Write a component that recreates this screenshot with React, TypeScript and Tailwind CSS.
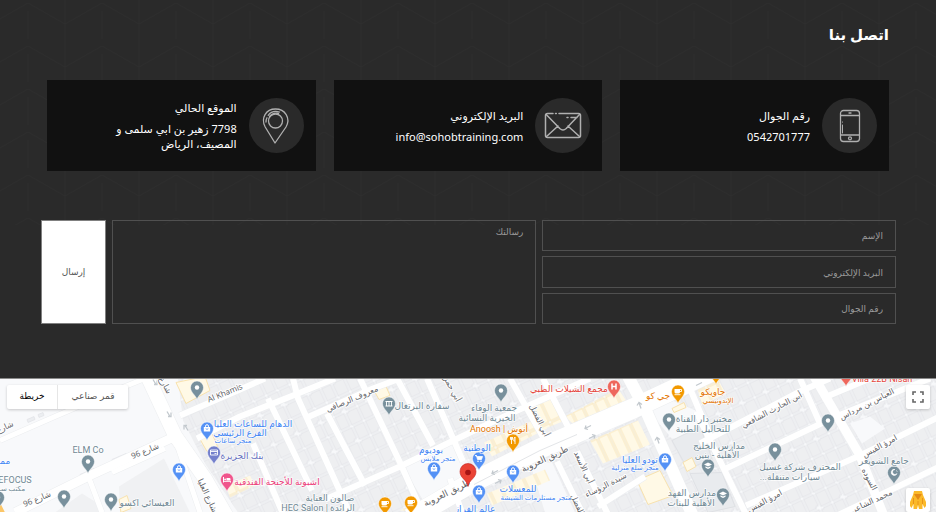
import type { ReactNode } from "react";

const uiFont = "font-['Noto_Sans','DejaVu_Sans',sans-serif]";

function PhoneIcon() {
  return (
    <svg className="h-9 w-9" viewBox="0 0 36 36" fill="none" stroke="#b0b0b0" strokeWidth="1.3" strokeLinecap="round" aria-hidden="true">
      <rect x="8.5" y="2.5" width="19" height="31" rx="3" />
      <path d="M9 7.500h18M9 27h18" />
      <path d="M10.500 17v8M10.500 14v.2" strokeWidth="1" />
      <path d="M17 5h2" />
      <circle cx="18" cy="30.300" r="1.500" />
    </svg>
  );
}

function MailIcon() {
  return (
    <svg className="h-10 w-10" viewBox="0 0 40 40" fill="none" stroke="#b0b0b0" strokeWidth="1.5" strokeLinecap="round" strokeLinejoin="round" aria-hidden="true">
      <path d="M10 7.500H4.500A2 2 0 0 0 2.500 9.500v20a2 2 0 0 0 2 2h31a2 2 0 0 0 2-2v-20a2 2 0 0 0-2-2H16M12.500 7.500h.8" />
      <path d="M3.200 8.500l13.600 14q3.200 3 6.400 0L36.500 8.500M3.500 30.500l11.500-10.500M36.500 30.500L25 20M28 11.500h6M24 11.500h1" />
    </svg>
  );
}

function PinIcon() {
  return (
    <svg className="h-9 w-9" viewBox="0 0 36 36" fill="none" stroke="#b0b0b0" strokeWidth="1.3" strokeLinecap="round" strokeLinejoin="round" aria-hidden="true">
      <path d="M17 35L7.200 19C2.500 10 8 1 17.500 1S33 10 28 19z" />
      <circle cx="17.500" cy="13" r="7" />
      <path d="M8 14c0-1.500.3-3 1-4.300M10.200 7.300C13 3.500 17.500 2.800 21.500 4M11.500 8.500c2.500-3 6-3.700 9-3" />
    </svg>
  );
}

function ContactCard({ title, icon, children }: { title: string; icon: ReactNode; children: ReactNode }) {
  return (
    <article className="flex h-[91px] items-center gap-3 bg-[#111111] px-3">
      <div className="flex size-[55px] shrink-0 items-center justify-center rounded-full bg-[#2a2a2a]">{icon}</div>
      <div className="text-[11px] leading-[15px] whitespace-nowrap text-white">
        <h2 className="mb-[6px]">{title}</h2>
        {children}
      </div>
    </article>
  );
}

function Backdrop() {
  return (
    <svg className="absolute inset-0 h-full w-full" aria-hidden="true">
      <defs>
        <pattern id="cubes" x="731" y="3" width="74" height="43" patternUnits="userSpaceOnUse">
          <path d="M0 21L37 0L74 21M0 0V43M74 0V43M37 8V36" fill="none" stroke="#2d2d2d" strokeWidth="1" />
        </pattern>
      </defs>
      <rect width="100%" height="225" fill="url(#cubes)" />
    </svg>
  );
}

const field =
  "border border-[#505050] bg-transparent px-3 text-[9px] text-[#cccccc] placeholder:text-[#9a9a9a] outline-none";

type Glyph = "dot" | "bag" | "cup" | "fork" | "bed" | "school" | "moon" | "h" | "bank" | "card" | "cart";

function PinGlyph({ glyph, color }: { glyph: Glyph; color: string }) {
  switch (glyph) {
    case "bag":
      return (
        <g>
          <rect x="-3.200" y="-1.500" width="6.400" height="4.500" fill="#fff" />
          <path d="M-1.500 -1.500v-.8a1.500 1.500 0 0 1 3 0v.8" fill="none" stroke="#fff" />
          <path d="M-1.300 .2q1.300 1.400 2.600 0" fill="none" stroke={color} strokeWidth=".8" />
        </g>
      );
    case "cart":
      return (
        <g>
          <path d="M-4 -3h1.500l1 4h4l1-3h-5z" fill="#fff" stroke="#fff" strokeWidth=".8" />
          <circle cx="-1" cy="2.800" r=".8" fill="#fff" />
          <circle cx="2" cy="2.800" r=".8" fill="#fff" />
        </g>
      );
    case "cup":
      return (
        <g>
          <path d="M-3.500 -2.500h5.500v3a1.500 1.500 0 0 1-1.500 1.500h-2.500a1.500 1.500 0 0 1-1.500-1.500z" fill="#fff" />
          <path d="M2 -2h1.500v2H2M-3.500 3.200h6" fill="none" stroke="#fff" strokeWidth=".9" />
        </g>
      );
    case "fork":
      return <path d="M-2.500 -3.500v2.500h2v-2.500M-1.500 -3.500v7M2 3.500v-7q-1.200 1-1.200 4H2" fill="none" stroke="#fff" strokeWidth=".9" />;
    case "bed":
      return (
        <g>
          <path d="M-3.500 -2.500v5.500M-3.500 1.800h7V3" fill="none" stroke="#fff" />
          <path d="M-.5 -1.500h3q1 0 1 1v1.500h-4z" fill="#fff" />
          <circle cx="-1.900" cy="-.2" r=".9" fill="#fff" />
        </g>
      );
    case "school":
      return (
        <g fill="#fff">
          <path d="M-4 -1L0 -3L4 -1L0 1z" />
          <path d="M-2.500 .8L0 2l2.500-1.200v1.500L0 3.500l-2.500-1.200z" />
        </g>
      );
    case "moon":
      return <path d="M1 -3a3 3 0 1 0 2 4a2.500 2.500 0 1 1-2-4M2 -2l1.500 1" fill="#fff" stroke="#fff" strokeWidth=".6" />;
    case "h":
      return <path d="M-2 -3v6M2 -3v6M-2 0h4" fill="none" stroke="#fff" strokeWidth="1.500" />;
    case "card":
      return <path d="M-3.500 -2.500h7v5h-7zM-3.500 -1h7M.5 1h2" fill="none" stroke="#fff" strokeWidth=".9" />;
    case "bank":
      return (
        <g>
          <path d="M-3.500 -2.500h7v1h-7zM-3.500 2h7v1h-7z" fill="#fff" />
          <path d="M-2.500 -1.500v4M0 -1.500v4M2.500 -1.500v4" stroke="#fff" strokeWidth=".9" />
        </g>
      );
    default:
      return <circle r="2.200" fill="#fff" />;
  }
}

function Pin({ x, y, color, glyph }: { x: number; y: number; color: string; glyph: Glyph }) {
  return (
    <g transform={`translate(${x} ${y})`}>
      <path d="M0 12C-1 8 -6.500 5 -6.500 0a6.500 6.500 0 0 1 13 0C6.500 5 1 8 0 12z" fill={color} stroke="#fff" strokeWidth=".5" />
      <PinGlyph glyph={glyph} color={color} />
    </g>
  );
}

const slate = "#6f8894";
const slatePin = "#78909c";
const blue = "#5491f5";
const blueText = "#4285f4";
const orange = "#f29900";

const pins: { x: number; y: number; color: string; glyph: Glyph }[] = [
  { x: 197, y: 9, color: slatePin, glyph: "dot" },
  { x: 88, y: 83, color: slatePin, glyph: "dot" },
  { x: 64, y: 118, color: slatePin, glyph: "dot" },
  { x: -2, y: 119, color: slatePin, glyph: "dot" },
  { x: 111, y: 121, color: slatePin, glyph: "dot" },
  { x: 207, y: 50, color: blue, glyph: "bag" },
  { x: 179, y: 91, color: blue, glyph: "bag" },
  { x: 214, y: 74, color: "#7480cc", glyph: "card" },
  { x: 227, y: 101, color: "#f0558c", glyph: "bed" },
  { x: 389, y: 25, color: slatePin, glyph: "bank" },
  { x: 434, y: 90, color: blue, glyph: "bag" },
  { x: 385, y: 125, color: orange, glyph: "cup" },
  { x: 411, y: 124, color: orange, glyph: "cup" },
  { x: 501, y: 12, color: slatePin, glyph: "dot" },
  { x: 513, y: 62, color: orange, glyph: "fork" },
  { x: 479, y: 80, color: blue, glyph: "cart" },
  { x: 513, y: 93, color: blue, glyph: "bag" },
  { x: 479, y: 113, color: blue, glyph: "bag" },
  { x: 614, y: 8, color: "#ee675c", glyph: "h" },
  { x: 678, y: 13, color: orange, glyph: "cup" },
  { x: 669, y: 41, color: slatePin, glyph: "dot" },
  { x: 665, y: 81, color: blue, glyph: "bag" },
  { x: 716, y: -6, color: orange, glyph: "dot" },
  { x: 846, y: -4, color: "#ee675c", glyph: "dot" },
  { x: 828, y: 42, color: slatePin, glyph: "dot" },
  { x: 775, y: 71, color: slatePin, glyph: "dot" },
  { x: 708, y: 87, color: slatePin, glyph: "school" },
  { x: 723, y: 116, color: slatePin, glyph: "school" },
  { x: 894, y: 94, color: slatePin, glyph: "moon" },
];

const labels: { x: number; y: number; text: string; color: string; size?: number }[] = [
  { x: 88, y: 74, text: "ELM Co", color: slate },
  { x: 15, y: 104, text: "EFOCUS", color: slate },
  { x: 12, y: 112, text: "مكتب سـ", color: slate, size: 7 },
  { x: 4, y: 85, text: "ممـ", color: blueText },
  { x: 147, y: 127, text: "العيسائي اكسو", color: slate },
  { x: 253, y: 48, text: "الدهام للساعات العليا", color: blueText },
  { x: 240, y: 57, text: "الفرع الرئيسي", color: blueText },
  { x: 233, y: 64, text: "متجر ساعات", color: blueText, size: 7 },
  { x: 242, y: 80, text: "بنك الجزيرة", color: "#6570c0" },
  { x: 277, y: 106, text: "اشبونة للأجنحة الفندقية", color: "#ec407a" },
  { x: 330, y: 122, text: "صالون العناية", color: slate },
  { x: 318, y: 132, text: "الرائدة | HEC Salon", color: slate },
  { x: 422, y: 30, text: "سفارة البرتغال", color: slate },
  { x: 431, y: 74, text: "بوديوم", color: blueText },
  { x: 438, y: 82, text: "متجر ملابس", color: blueText, size: 7 },
  { x: 494, y: 32, text: "جمعية الوفاء", color: slate },
  { x: 487, y: 42, text: "الخيرية النسائية", color: slate },
  { x: 499, y: 53, text: "أنوش | Anoosh", color: "#e37400" },
  { x: 477, y: 72, text: "الوطنية", color: blueText },
  { x: 569, y: 13, text: "مجمع الشيلات الطبي", color: "#e5443a" },
  { x: 658, y: 20, text: "جي كو", color: "#e37400" },
  { x: 713, y: 16, text: "جاويكو", color: "#e37400" },
  { x: 718, y: 24, text: "الإندونيسي", color: "#e37400", size: 7 },
  { x: 704, y: 43, text: "مختبر دار القناة", color: slate },
  { x: 703, y: 53, text: "للتحاليل الطبية", color: slate },
  { x: 640, y: 84, text: "تودو العليا", color: blueText },
  { x: 635, y: 91, text: "متجر سلع منزلية", color: blueText, size: 7 },
  { x: 719, y: 70, text: "مدارس الخليج", color: slate },
  { x: 717, y: 79, text: "الأهلية - بنين", color: slate },
  { x: 518, y: 113, text: "للمعسلات", color: blueText },
  { x: 536, y: 121, text: "متجر مستلزمات الشيشة", color: blueText, size: 7 },
  { x: 475, y: 133, text: "عالم الفراز", color: blueText },
  { x: 692, y: 117, text: "مدارس الفهد", color: slate },
  { x: 691, y: 127, text: "الأهلية للبنات", color: slate },
  { x: 800, y: 91, text: "المحترف شركة غسيل", color: slate },
  { x: 790, y: 101, text: "سيارات متنقلة...", color: slate },
  { x: 884, y: 85, text: "جامع الشويعر", color: slate },
  { x: 882, y: 3, text: "Villa 22B Nisan", color: "#e5443a" },
];

const streets: { x: number; y: number; a: number; text: string; size?: number }[] = [
  { x: 6, y: 51, a: -25, text: "شارع" },
  { x: 163, y: 8, a: 62, text: "شارع" },
  { x: 146, y: 75, a: -22, text: "شارع 96" },
  { x: 38, y: 123, a: -22, text: "شارع 96" },
  { x: 226, y: 17, a: -22, text: "Al Khamis" },
  { x: 205, y: 118, a: 65, text: "شارع العليا" },
  { x: 353, y: 23, a: -23, text: "معروف الرصافي" },
  { x: 449, y: 10, a: 62, text: "أبي حمزة" },
  { x: 448, y: 117, a: -26, text: "طريق العروبة", size: 9 },
  { x: 546, y: 83, a: -25, text: "طريق العروبة", size: 9 },
  { x: 537, y: 43, a: 64, text: "أبي الفضل" },
  { x: 581, y: 90, a: 65, text: "أبي الأسعد" },
  { x: 575, y: 127, a: 65, text: "الفضل" },
  { x: 607, y: 109, a: -27, text: "سيدة الرؤساء" },
  { x: 773, y: 34, a: -28, text: "أبي الحارث الشافعي" },
  { x: 868, y: 28, a: -27, text: "العباس بن مرداس" },
  { x: 881, y: 70, a: -29, text: "امرؤ القيس" },
  { x: 766, y: 125, a: -29, text: "امرؤ القيس" },
  { x: 867, y: 102, a: 62, text: "السوده" },
  { x: 873, y: 125, a: -25, text: "محمد الشاعر" },
];

const minorRoads =
  "M180 37L240 11L265 0M197 60L240 38L293 17L335 0M307 39L373 10L400 0M293 0L298 20L340 113L352 140M268 20L312 112M253 65L285 140M327 35L365 107M360 0L400 84L425 140M397 0L433 67M427 0L463 83M325 121L400 88L470 54L515 33L590 0M510 0L545 62M543 0L570 52M557 83L585 140M577 73L610 140M696 33L748 140M800 0L820 45M700 65L800 13L830 0M726 90L836 38L930 0M746 127L860 77L940 38M835 138L940 88M822 20L870 0M450 100L462 134M598 128L645 98M690 10L712 62";

function StreetMap() {
  return (
    <svg className="absolute inset-0 h-full w-full" viewBox="0 0 936 134" preserveAspectRatio="xMidYMid slice" role="img" aria-label="خريطة الموقع">
      <defs>
        <pattern id="lots" width="26" height="32" patternUnits="userSpaceOnUse" patternTransform="rotate(-25)">
          <rect width="26" height="32" fill="#f7f8fa" />
          <g fill="#eeeff1" stroke="#dfe1e5" strokeWidth=".8">
            <path d="M1 1h11v12h-3v2h-8zM14 1h11v14h-11zM1 17h10v14h-10zM13 18h3v-1h9v14h-12z" />
          </g>
        </pattern>
        <pattern id="shops" width="12" height="34" patternUnits="userSpaceOnUse" patternTransform="rotate(-25)">
          <rect width="12" height="34" fill="#f9f7f0" />
          <path d="M1 1h10v32h-10z" fill="#fff9e6" stroke="#f8e2ae" strokeWidth=".8" />
        </pattern>
      </defs>
      <rect width="936" height="134" fill="#f8f9fb" />
      <path d="M178 0H936V134H238L205 85L183 42Z" fill="url(#lots)" />
      <path d="M119 108L164 80L190 134H120ZM55 134L82 115L98 125L100 134Z" fill="#f0f1f3" />
      <path d="M403 88L458 62L475 100L425 125ZM850 45L870 38L885 50L862 65ZM530 85L552 84L575 134H545ZM648 32L668 20L700 34L712 62L672 60Z" fill="#f8f9fb" />
      <path d="M672 62L700 48L712 80L690 90L684 84ZM690 95L722 94L735 128L708 134Z" fill="#e9ebee" stroke="#dfe1e5" />
      <g fill="#eceef1" stroke="#e1e3e6" strokeWidth=".7">
        <path d="M27 41l7-3 1 3-7 3zM38 36l5-2 1 3-5 2zM112 81l14-6 1 3-14 6zM137 71l8-4 1 3-8 4zM80 96l14-6 1 3-14 6z" />
      </g>
      <path d="M176 4L205 -2L210 12L186 25Z" fill="#fff9e6" stroke="#f8e2ae" />
      <path d="M199 59L212 55L218 69L207 73ZM374 12L386 8L390 17L379 21ZM119 121L127 117L131 130L121 134ZM683 84L692 79L696 88L687 93ZM672 30L684 24L686 29L674 34Z" fill="#fff9e6" stroke="#f8e2ae" />
      <path d="M0 124L5 134H0Z" fill="#fbc668" />
      <path d="M484 64L542 38L547 50L492 78ZM565 38L618 10L628 25L575 47ZM532 22L553 15L565 42L545 50ZM590 62L638 42L650 66L603 85ZM487 115L545 91L550 102L492 127ZM696 5L716 -2L726 15L702 26ZM226 107L250 97L255 107L230 119ZM400 132L425 120L440 134Z" fill="url(#shops)" />
      <path d="M637 102L660 92L673 117L648 126Z" fill="#fff9e6" stroke="#f8e2ae" />
      <g fill="none" stroke="#eceef0" strokeLinejoin="round">
        <path d={minorRoads} strokeWidth="7" />
        <path d="M0 62L55 38L125 8L145 0M112 94L165 70M88 97L102 134M175 60L200 134" strokeWidth="6" />
        <path d="M15 134L90 97L175 58" strokeWidth="10" />
        <path d="M147 -3L175 57L205 100L228 140" strokeWidth="15" />
        <path d="M410 140L470 105L540 70L633 30L710 -6" strokeWidth="21" />
        <path d="M628 -2L645 30L665 75L694 140" strokeWidth="13" />
        <path d="M814 -2L860 77L885 140" strokeWidth="10" />
      </g>
      <g fill="none" stroke="#ffffff" strokeLinejoin="round">
        <path d={minorRoads} strokeWidth="6" />
        <path d="M0 62L55 38L125 8L145 0M112 94L165 70M88 97L102 134M175 60L200 134" strokeWidth="5" />
        <path d="M15 134L90 97L175 58" strokeWidth="9" />
        <path d="M147 -3L175 57L205 100L228 140" strokeWidth="14" />
        <path d="M410 140L470 105L540 70L633 30L710 -6" strokeWidth="20" />
        <path d="M628 -2L645 30L665 75L694 140" strokeWidth="12" />
        <path d="M814 -2L860 77L885 140" strokeWidth="9" />
      </g>
      <path d="M474 106L540 72L577 56" stroke="#e3e5e8" fill="none" />
      <g fill="none" stroke="#c3c9ce" strokeWidth="1.300">
        <path d="M153 1l3 5M154 6h3V2M167 33l3 5M168 38h3v-4M188 52l-3-5M184 51v-4h3M585 50l6-3M586 47l-1 3 3 1M589 60l6-3M592 56l3 1-1 3M492 95l6-3M493 92l-1 3 3 1M495 105l6-3M498 101l3 1-1 3M641 30l-2-6M637 27l2-3 3 2M659 65l-2-6M655 62l2-3 3 2M696 7l6-3" />
      </g>
      <g textAnchor="middle" fontFamily="'Noto Sans', 'DejaVu Sans', sans-serif" fill="#5f6368" stroke="#ffffff" strokeWidth="2" paintOrder="stroke" strokeLinejoin="round">
        {streets.map((s) => (
          <text key={`${s.x}-${s.y}`} transform={`translate(${s.x} ${s.y}) rotate(${s.a})`} fontSize={s.size ?? 8}>
            {s.text}
          </text>
        ))}
      </g>
      {pins.map((p) => (
        <Pin key={`${p.x}-${p.y}`} {...p} />
      ))}
      <g textAnchor="middle" fontFamily="Roboto, 'DejaVu Sans', sans-serif" stroke="#ffffff" strokeWidth="1.500" strokeOpacity=".8" paintOrder="stroke" strokeLinejoin="round">
        {labels.map((l) => (
          <text key={`${l.x}-${l.y}`} x={l.x} y={l.y} fill={l.color} fontSize={l.size ?? 9} style={{ direction: "rtl" }}>
            {l.text}
          </text>
        ))}
      </g>
      <path d="M468 108C467 101 460 100 460 93a8 8 0 0 1 16 0C476 100 469 101 468 108z" fill="#ea4335" stroke="#c5221f" strokeWidth=".6" />
      <circle cx="468" cy="94" r="2.800" fill="#a51414" />
    </svg>
  );
}

export default function App() {
  return (
    <main dir="rtl" lang="ar" className={`flex min-h-screen flex-col bg-[#2a2a2a] ${uiFont}`}>
      <section className="relative pb-[54px]">
        <Backdrop />
        <div className="relative px-[47px] pt-6">
          <h1 className="text-[15px] leading-5 font-bold text-white">اتصل بنا</h1>
          <div className="mt-9 grid grid-cols-3 gap-[18px]">
            <ContactCard title="رقم الجوال" icon={<PhoneIcon />}>
              <p>0542701777</p>
            </ContactCard>
            <ContactCard title="البريد الإلكتروني" icon={<MailIcon />}>
              <p>info@sohobtraining.com</p>
            </ContactCard>
            <ContactCard title="الموقع الحالي" icon={<PinIcon />}>
              <p>
                7798 زهير بن ابي سلمى و
                <br />
                المصيف، الرياض
              </p>
            </ContactCard>
          </div>
        </div>
        <form className="relative mt-[49px] grid grid-cols-[5fr_6fr_65px] gap-[6px] pr-10 pl-[41px]" onSubmit={(e) => e.preventDefault()}>
          <div className="grid gap-[5px]">
            <input aria-label="الإسم" placeholder="الإسم" className={`h-[31px] ${field}`} />
            <input aria-label="البريد الإلكتروني" type="email" placeholder="البريد الإلكتروني" className={`h-[32px] ${field}`} />
            <input aria-label="رقم الجوال" type="tel" dir="rtl" placeholder="رقم الجوال" className={`h-[31px] ${field}`} />
          </div>
          <textarea aria-label="رسالتك" placeholder="رسالتك" className={`resize-none py-1 ${field}`} />
          <button type="submit" className="border border-[#808080] bg-white text-[9px] text-[#555555]">
            إرسال
          </button>
        </form>
      </section>

      <section dir="ltr" className="relative min-h-[134px] flex-1 overflow-hidden border-t border-[#8a8a8a] bg-[#f8f9fb]">
        <StreetMap />
        <div className="absolute top-[6px] left-[7px] flex h-6 rounded-xs bg-white font-['Liberation_Sans','DejaVu_Sans',sans-serif] text-[9px] shadow-[0_1px_3px_rgba(0,0,0,0.2)]">
          <button type="button" className="w-[51px] border-r border-[#e6e6e6] font-medium text-black">خريطة</button>
          <button type="button" className="w-[70px] text-[#565656]">قمر صناعي</button>
        </div>
        <button type="button" aria-label="ملء الشاشة" className="absolute top-[6px] right-[6px] flex size-6 items-center justify-center rounded-xs bg-white shadow-[0_1px_3px_rgba(0,0,0,0.2)]">
          <svg className="size-3" viewBox="0 0 12 12" fill="none" stroke="#666666" strokeWidth="1.600" aria-hidden="true">
            <path d="M1 4V1h3M8 1h3v3M11 8v3H8M4 11H1V8" />
          </svg>
        </button>
        <button type="button" aria-label="التجوّل الافتراضي" className="absolute right-[6px] bottom-0 flex size-6 items-center justify-center rounded-xs bg-white shadow-[0_1px_3px_rgba(0,0,0,0.2)]">
          <svg className="h-5 w-5" viewBox="0 0 20 20" aria-hidden="true">
            <path d="M6 1h8l1 4 3 7v4l-1.500 2-2-4v5h-3.500l-1-4-1 4H5.500v-5l-2 4L2 16v-4l3-7z" fill="#fbb929" />
            <path d="M6 4l4 6 4-6z" fill="#e58a15" />
            <path d="M5.500 8v6M14.500 8v6M10 11v4" stroke="#e58a15" strokeWidth=".8" />
          </svg>
        </button>
      </section>
    </main>
  );
}
